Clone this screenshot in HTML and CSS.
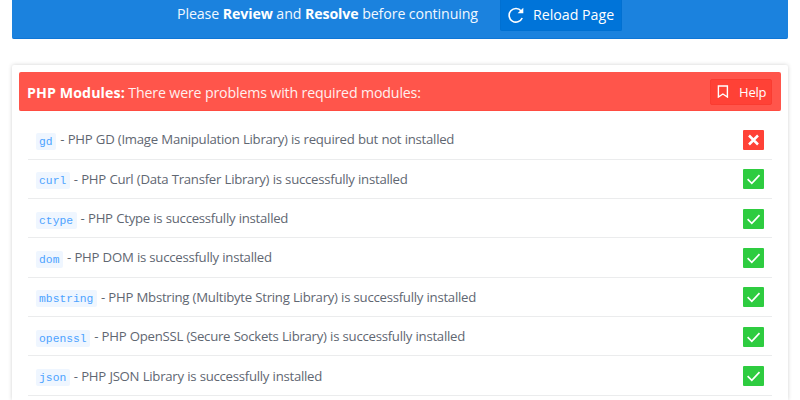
FILE: index.html
```html
<!DOCTYPE html>
<html lang="en">
<head>
    <meta charset="UTF-8">
    <meta name="viewport" content="width=device-width, initial-scale=1.0">
    <title>Installer - PHP Modules</title>
    <link rel="stylesheet" href="styles.css">
</head>
<body>

    <!-- Shared icons -->
    <svg class="icon-defs" width="0" height="0">
        <symbol id="icon-check" viewBox="0 0 21 20">
            <path d="M4.6 10.2 8.8 14.3 16.5 6.2" fill="none" stroke="#fff" stroke-width="1.7"/>
        </symbol>
        <symbol id="icon-cross" viewBox="0 0 21 20">
            <path d="M6 5.5 15 14.5M15 5.5 6 14.5" fill="none" stroke="#fff" stroke-width="2.5"/>
        </symbol>
    </svg>

    <!-- Top notice -->
    <div class="notice">
        <p class="notice-text">Please <strong>Review</strong> and <strong>Resolve</strong> before continuing</p>
        <a class="btn btn-reload" href="#">
            <svg width="16" height="16" viewBox="0 0 16 16">
                <path d="M13.2 4A6.8 6.8 0 1 0 14.2 11" fill="none" stroke="#fff" stroke-width="1.6"/>
                <path d="M15.3 .8V6.2H9.6Z" fill="#fff"/>
            </svg>
            <span>Reload Page</span>
        </a>
    </div>

    <!-- PHP modules -->
    <section class="card">
        <div class="card-header">
            <p class="card-title"><strong>PHP Modules:</strong> There were problems with required modules:</p>
            <a class="btn btn-help" href="#">
                <svg width="12" height="13" viewBox="0 0 12 13">
                    <path d="M1.4 1H10.4V12L5.9 9 1.4 12Z" fill="none" stroke="#fff" stroke-width="1.4"/>
                </svg>
                <span>Help</span>
            </a>
        </div>
        <ul class="modules">
            <li class="module">
                <code>gd</code>
                <span class="module-text">- PHP GD (Image Manipulation Library) is required but not installed</span>
                <svg class="status status-error"><use href="#icon-cross"/></svg>
            </li>
            <li class="module">
                <code>curl</code>
                <span class="module-text">- PHP Curl (Data Transfer Library) is successfully installed</span>
                <svg class="status"><use href="#icon-check"/></svg>
            </li>
            <li class="module">
                <code>ctype</code>
                <span class="module-text">- PHP Ctype is successfully installed</span>
                <svg class="status"><use href="#icon-check"/></svg>
            </li>
            <li class="module">
                <code>dom</code>
                <span class="module-text">- PHP DOM is successfully installed</span>
                <svg class="status"><use href="#icon-check"/></svg>
            </li>
            <li class="module">
                <code>mbstring</code>
                <span class="module-text">- PHP Mbstring (Multibyte String Library) is successfully installed</span>
                <svg class="status"><use href="#icon-check"/></svg>
            </li>
            <li class="module">
                <code>openssl</code>
                <span class="module-text">- PHP OpenSSL (Secure Sockets Library) is successfully installed</span>
                <svg class="status"><use href="#icon-check"/></svg>
            </li>
            <li class="module">
                <code>json</code>
                <span class="module-text">- PHP JSON Library is successfully installed</span>
                <svg class="status"><use href="#icon-check"/></svg>
            </li>
        </ul>
    </section>

</body>
</html>
```
FILE: styles.css
```css
* {
    box-sizing: border-box;
}

body {
    margin: 0;
    padding: 0 12px;
    height: 400px;
    overflow: hidden;
    background: #fff;
    font-family: "Segoe UI", "Open Sans", "Noto Sans", sans-serif;
    color: #5f6772;
}

p,
ul {
    margin: 0;
    padding: 0;
}

.icon-defs {
    display: none;
}

/* Buttons */
.btn {
    display: flex;
    align-items: center;
    color: #fff;
    text-decoration: none;
    white-space: nowrap;
    border-radius: 2px;
}

/* Top notice */
.notice {
    display: flex;
    justify-content: center;
    align-items: flex-start;
    width: 776px;
    height: 39.4px;
    padding-right: 1px;
    background: #1b82de;
    border-bottom: 1px solid #0f76d6;
    border-radius: 0 0 2px 2px;
    color: #f1f8ff;
}

.notice-text {
    width: 301px;
    margin-right: 22px;
    line-height: 28px;
    font-size: 14.2px;
    letter-spacing: -0.1px;
    white-space: nowrap;
}

.notice-text strong {
    color: #fff;
}

.btn-reload {
    gap: 9px;
    width: 122px;
    height: 31px;
    padding: 0 0 1px 7px;
    background: #0074d9;
    border: 1px solid #0070d2;
    border-top: 0;
    border-radius: 0 0 2px 2px;
    font-size: 14.2px;
}

/* Modules card */
.card {
    width: 776px;
    height: 334.5px;
    margin-top: 26.1px;
    padding: 7px 7px 0;
    border-radius: 2px 2px 0 0;
    box-shadow: 0 0 4px rgba(0, 0, 0, 0.18);
}

.card-header {
    display: flex;
    justify-content: space-between;
    align-items: center;
    height: 38.5px;
    padding: 1px 9px 0 8px;
    background: #ff554b;
    border: 1px solid #ff4c41;
    border-width: 0 0 1px;
    border-radius: 2px;
    color: #fff0ef;
}

.card-title {
    padding-top: 1px;
    font-size: 14.2px;
    letter-spacing: -0.16px;
    white-space: nowrap;
}

.card-title strong {
    color: #fff;
    letter-spacing: 0.1px;
}

.btn-help {
    gap: 10px;
    width: 62px;
    height: 26px;
    padding-left: 6px;
    background: #ff4136;
    border: 1px solid #fa3c31;
    font-size: 13px;
    letter-spacing: -0.2px;
}

/* Modules list */
.modules {
    margin: 9.2px 9px 0 9px;
    list-style: none;
}

.module {
    display: flex;
    align-items: center;
    height: 39.37px;
    padding: 0 8px 0 7.5px;
    border-bottom: 1px solid #ebeced;
}

.module code {
    height: 17px;
    margin-top: 4px;
    padding: 0 3.6px;
    background: #eff6ff;
    border-radius: 2px;
    color: #4da3ff;
    font-family: "Courier New", "Liberation Mono", monospace;
    font-size: 11.3px;
    line-height: 18px;
}

.module-text {
    margin-left: 4px;
    font-size: 13.2px;
    letter-spacing: -0.27px;
    word-spacing: 0.25px;
    white-space: nowrap;
}

.status {
    width: 21px;
    height: 20px;
    margin-top: 1px;
    margin-left: auto;
    background: #2ecc40;
    border-radius: 1px;
}

.status-error {
    background: #ff4136;
}
```
